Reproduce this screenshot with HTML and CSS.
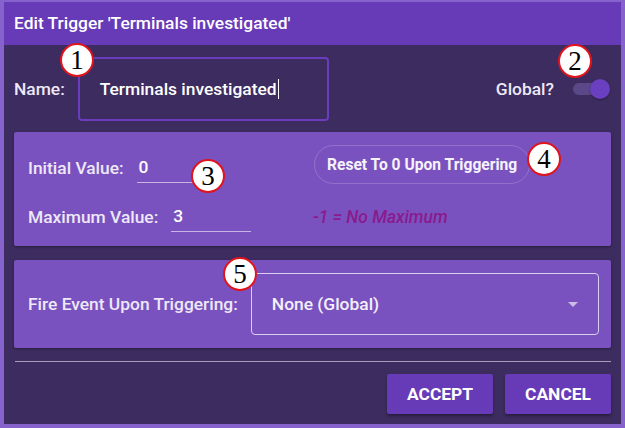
FILE: index.html
```html
<!DOCTYPE html>
<html>
<head>
<meta charset="utf-8">
<link rel="stylesheet" href="styles.css">
</head>
<body>
<div class="dialog">
  <div class="header">Edit Trigger 'Terminals investigated'</div>
  <div class="content">
    <div class="name-row">
      <span class="label">Name:</span>
      <div class="name-box"><span class="name-text">Terminals investigated</span><span class="caret"></span></div>
      <span class="label global">Global?</span>
      <div class="toggle"><div class="track"></div><div class="thumb"></div></div>
    </div>

    <div class="panel values">
      <div class="vrow vrow-1">
        <div class="field">
          <span class="label">Initial Value:</span>
          <div class="line-input">0</div>
        </div>
        <div class="reset-btn">Reset To 0 Upon Triggering</div>
      </div>
      <div class="vrow vrow-2">
        <div class="field">
          <span class="label">Maximum Value:</span>
          <div class="line-input">3</div>
        </div>
        <div class="hint">-1 = No Maximum</div>
      </div>
    </div>

    <div class="panel event">
      <span class="label">Fire Event Upon Triggering:</span>
      <div class="select">
        <span>None (Global)</span>
        <svg class="arrow" width="10" height="5" viewBox="0 0 10 5"><path d="M0 0 L10 0 L5 5 Z" fill="#c9bde3"/></svg>
      </div>
    </div>

    <div class="divider"></div>

    <div class="actions">
      <div class="btn">ACCEPT</div>
      <div class="btn">CANCEL</div>
    </div>
  </div>

  <div class="mark m1">1</div>
  <div class="mark m2">2</div>
  <div class="mark m3">3</div>
  <div class="mark m4">4</div>
  <div class="mark m5">5</div>
</div>
</body>
</html>
```
FILE: styles.css
```css
html, body {
  margin: 0;
  padding: 0;
}
body {
  width: 625px;
  height: 428px;
  background: #8663cc;
  font-family: Roboto, "Liberation Sans", sans-serif;
  color: #f1ecfa;
  overflow: hidden;
}
.dialog {
  position: relative;
  margin: 2px 4px 0 4px;
  height: 422px;
  background: #3d2c5f;
  display: flex;
  flex-direction: column;
}
.header {
  height: 43px;
  line-height: 43px;
  background: #673ab7;
  padding-left: 10px;
  font-size: 17.4px;
  font-weight: 500;
  color: #ffffff;
}
.content {
  padding: 0 10px;
  display: flex;
  flex-direction: column;
}
.label {
  font-size: 17.4px;
  font-weight: 500;
  color: #eee8f8;
  white-space: nowrap;
}
.name-row {
  display: flex;
  align-items: center;
  padding-top: 12px;
}
.name-box {
  margin-left: 13px;
  width: 251px;
  height: 64px;
  box-sizing: border-box;
  border: 2px solid #6a3dbd;
  border-radius: 4px;
  padding-left: 20px;
  display: flex;
  align-items: center;
  font-size: 17.4px;
  font-weight: 500;
  color: #ffffff;
}
.caret {
  display: inline-block;
  width: 1px;
  height: 20px;
  background: #ffffff;
  margin-left: 1px;
}
.global {
  margin-left: auto;
}
.toggle {
  position: relative;
  width: 38px;
  height: 20px;
  margin-left: 18px;
  margin-right: 1px;
}
.track {
  position: absolute;
  left: 1px;
  top: 4px;
  width: 30px;
  height: 12px;
  border-radius: 6px;
  background: #5b4888;
}
.thumb {
  position: absolute;
  right: 0;
  top: 0;
  width: 20px;
  height: 20px;
  border-radius: 50%;
  background: #6a3fc0;
  box-shadow: 0 1px 2px rgba(0,0,0,0.35);
}
.panel {
  background: #7a52bf;
  border-radius: 2px;
  box-shadow: 0 1px 3px rgba(0,0,0,0.35);
}
.values {
  margin-top: 11px;
  height: 114px;
  box-sizing: border-box;
  padding: 13px 14px 0 14px;
}
.vrow {
  display: grid;
  grid-template-columns: 285px 1fr;
}
.vrow-1 {
  height: 39px;
}
.vrow-2 {
  margin-top: 19px;
}
.field {
  display: flex;
  align-items: flex-start;
}
.vrow-1 .field {
  margin-top: 9px;
}
.field .label {
  line-height: 28px;
}
.line-input {
  margin-left: 13px;
  width: 80px;
  height: 29px;
  line-height: 27px;
  box-sizing: border-box;
  border-bottom: 1px solid #c6b6e6;
  padding-left: 2px;
  font-size: 17.4px;
  font-weight: 500;
  color: #ffffff;
}
.reset-btn {
  justify-self: start;
  margin-left: 1px;
  height: 39px;
  box-sizing: border-box;
  border: 1px solid rgba(255,255,255,0.18);
  border-radius: 20px;
  padding: 0 12px;
  display: flex;
  align-items: center;
  font-size: 15.6px;
  font-weight: 700;
  color: #f6f2fc;
}
.hint {
  line-height: 28px;
  font-size: 17.4px;
  font-weight: 500;
  font-style: italic;
  color: #8a1a8e;
}
.event {
  margin-top: 14px;
  height: 88px;
  box-sizing: border-box;
  padding: 0 12px 0 14px;
  display: flex;
  align-items: center;
}
.select {
  margin-left: 13px;
  flex: 1;
  height: 62px;
  box-sizing: border-box;
  border: 1px solid #d9cfee;
  border-radius: 4px;
  padding: 0 20px 0 20px;
  display: flex;
  align-items: center;
  justify-content: space-between;
  font-size: 17.4px;
  font-weight: 500;
  color: #f4f0fb;
}
.divider {
  margin-top: 13px;
  margin-left: 1px;
  height: 1px;
  background: #a89db8;
}
.actions {
  margin-top: 12px;
  display: flex;
  justify-content: flex-end;
  gap: 12px;
}
.btn {
  width: 106px;
  height: 40px;
  background: #673ab7;
  border-radius: 2px;
  box-shadow: 0 2px 3px rgba(0,0,0,0.35);
  display: flex;
  align-items: center;
  justify-content: center;
  font-size: 17.4px;
  font-weight: 700;
  color: #ffffff;
}
.mark {
  position: absolute;
  width: 34px;
  height: 34px;
  box-sizing: border-box;
  border: 2px solid #e0141c;
  border-radius: 50%;
  background: #ffffff;
  color: #000000;
  font-family: "Liberation Serif", "DejaVu Serif", serif;
  font-size: 27px;
  line-height: 30px;
  text-align: center;
}
.m1 { left: 56px; top: 41px; }
.m2 { left: 554px; top: 42px; }
.m3 { left: 187px; top: 157px; }
.m4 { left: 523px; top: 140px; }
.m5 { left: 219px; top: 255px; }
```
